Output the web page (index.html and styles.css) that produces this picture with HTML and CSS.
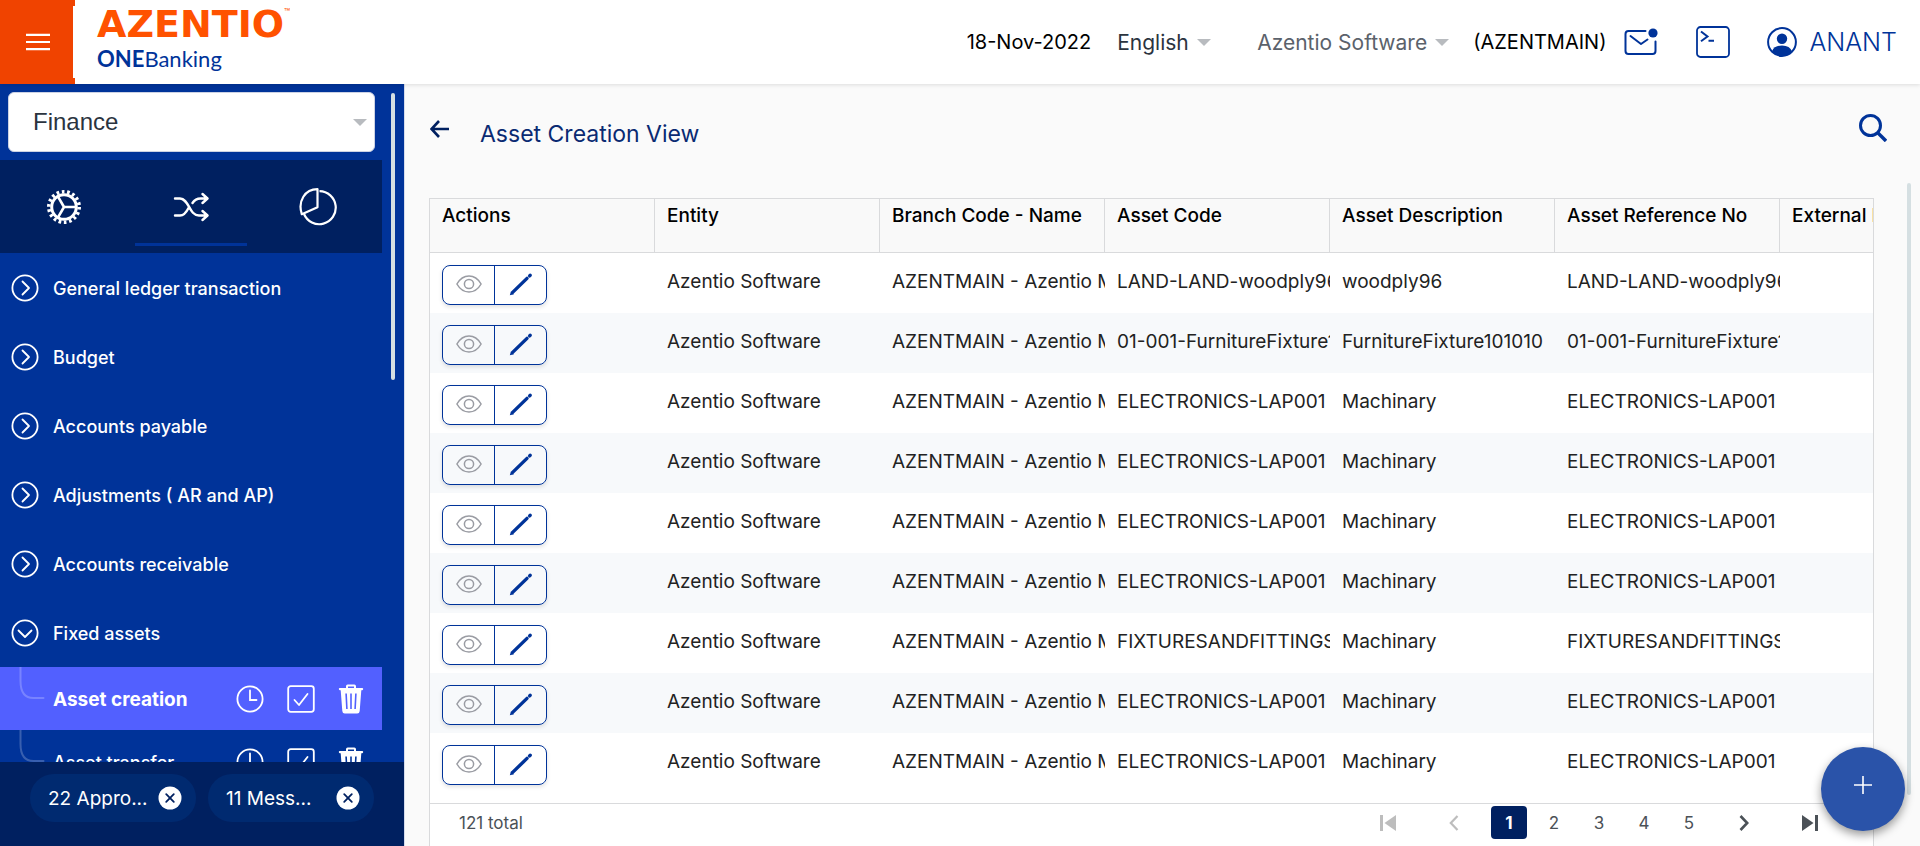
FILE: index.html
```html
<!DOCTYPE html>
<html lang="en">
<head>
<meta charset="utf-8">
<title>Asset Creation View</title>
<link rel="stylesheet" href="styles.css">
</head>
<body>
<svg class="sprite" aria-hidden="true">
  <symbol id="caret" viewBox="0 0 14 7"><path d="M0 0h14L7 7z" fill="currentColor"/></symbol>
  <symbol id="chev-right" viewBox="0 0 28 28"><g fill="none" stroke="currentColor" stroke-width="1.8"><circle cx="14" cy="14" r="12.6"/><path d="M11.5 7.5l6.5 6.5-6.5 6.5" stroke-linecap="round" stroke-linejoin="round"/></g></symbol>
  <symbol id="chev-down" viewBox="0 0 28 28"><g fill="none" stroke="currentColor" stroke-width="1.8"><circle cx="14" cy="14" r="12.6"/><path d="M7.5 11.5l6.5 6.5 6.5-6.5" stroke-linecap="round" stroke-linejoin="round"/></g></symbol>
  <symbol id="clock" viewBox="0 0 28 28"><g fill="none" stroke="currentColor" stroke-width="1.8" stroke-linecap="round"><circle cx="14" cy="14" r="12.6"/><path d="M14 5.5V15h6.5"/></g></symbol>
  <symbol id="check" viewBox="0 0 28 28"><g fill="none" stroke="currentColor" stroke-width="1.8" stroke-linecap="round" stroke-linejoin="round"><rect x="1.2" y="1.2" width="25.6" height="25.6" rx="2.5"/><path d="M7.5 15l4.5 5 8.5-11"/></g></symbol>
  <symbol id="trash" viewBox="0 0 26 30"><path fill="currentColor" fill-rule="evenodd" d="M8 4V2.2Q8 .5 9.700.5h6.600Q18 .5 18 2.200V4h6.200q1 0 1 1t-1 1.200H23.300L21.700 27q-.2 2.500-2.500 2.500H6.800q-2.300 0-2.500-2.500L2.700 6.200H1.800q-1-.2-1-1.200t1-1zm2 0h6V2.500h-6zM7.300 9.500l.8 15.500h1.600L8.900 9.500zm4.900 0V25h1.600V9.500zm4.900 0L16.300 25h1.600l.8-15.500z"/></symbol>
  <symbol id="branch" viewBox="0 0 26 34"><path d="M1.500 0v14q0 17 13 17h10" fill="none" stroke="currentColor" stroke-width="2" stroke-linecap="round"/></symbol>
  <symbol id="close" viewBox="0 0 24 24"><circle cx="12" cy="12" r="11.500" fill="#fff"/><path d="M8.200 8.200l7.600 7.600m0-7.600l-7.600 7.600" stroke="#002060" stroke-width="1.800" stroke-linecap="round"/></symbol>
  <symbol id="eye" viewBox="0 0 26 18"><g fill="none" stroke="currentColor" stroke-width="1.500"><path d="M.9 9Q5.500 1 13 1t12.100 8Q20.500 17 13 17T.9 9z"/><circle cx="13" cy="9" r="4.600"/></g></symbol>
  <symbol id="pencil" viewBox="0 0 24 24"><path d="M3.600 20.400L18 6.400M20.600 3.900l.6-.6" fill="none" stroke="currentColor" stroke-width="3.400" stroke-linecap="round"/><path d="M.8 23.200l1.200-4 3 3z" fill="currentColor"/></symbol>
</svg>

<header class="topbar">
  <button class="burger" aria-label="Menu">
    <svg width="24" height="18" viewBox="0 0 24 18"><path d="M0 1.800h24M0 9h24M0 16.200h24" stroke="#fff" stroke-width="2.200"/></svg>
  </button>
  <a class="brand" href="#">
    <span class="brand-name">AZENTIO<sup>™</sup></span>
    <span class="brand-sub"><b>ONE</b>Banking</span>
  </a>
  <div class="tools">
    <span class="info">18-Nov-2022</span>
    <label class="pick language"><select aria-label="Language"><option>English</option></select><svg width="14" height="7"><use href="#caret"/></svg></label>
    <label class="pick company"><select aria-label="Company"><option>Azentio Software</option></select><svg width="14" height="7"><use href="#caret"/></svg></label>
    <span class="info">(AZENTMAIN)</span>
    <button class="plain mail" aria-label="Messages">
      <svg width="34" height="28" viewBox="0 0 34 28"><g fill="none" stroke="currentColor" stroke-width="2" stroke-linecap="round" stroke-linejoin="round"><path d="M21.500 3H4.500Q1.500 3 1.500 6v17q0 3 3 3h24q3 0 3-3V13.500"/><path d="M6.500 8l10.500 8 6.500-4.500"/></g><circle cx="29" cy="5" r="4.600" fill="currentColor"/></svg>
    </button>
    <button class="plain terminal" aria-label="Terminal">
      <svg width="34" height="32" viewBox="0 0 34 32"><g fill="none" stroke="currentColor"><rect x="1" y="1" width="32" height="30" rx="3.500" stroke-width="1.800"/><path d="M5 5.500l6.500 5L5 15.200M12.500 14.800h5.500" stroke-width="2"/></g></svg>
    </button>
    <a class="user" href="#">
      <svg width="30" height="30" viewBox="0 0 30 30"><circle cx="15" cy="15" r="13.900" fill="none" stroke="currentColor" stroke-width="2"/><circle cx="15" cy="11.800" r="5.200" fill="currentColor"/><path d="M5 24.500q2-6 10-6t10 6Q21 29 15 29T5 24.500z" fill="currentColor"/></svg>
      <span>ANANT</span>
    </a>
  </div>
</header>

<div class="shell">
  <aside class="sidebar">
    <div class="side-scroll">
      <div class="side-body">
        <label class="module"><select aria-label="Module"><option>Finance</option></select><svg width="14" height="7"><use href="#caret"/></svg></label>
        <div class="tabs">
          <button class="tab" aria-label="Settings">
            <svg width="36" height="36" viewBox="0 0 36 36"><g fill="none" stroke="#fff"><circle cx="18" cy="18" r="12.300" stroke-width="3"/><circle cx="18" cy="18" r="15.200" stroke-width="3.600" stroke-dasharray="2.650 2.656"/><path d="M18 18h12M18 18L12 7.600M18 18l-6 10.400" stroke-width="2.600"/></g></svg>
          </button>
          <button class="tab current" aria-label="Transactions">
            <svg width="36" height="30" viewBox="0 0 36 30"><g fill="none" stroke="#fff" stroke-width="2.400" stroke-linecap="round" stroke-linejoin="round"><path d="M2 6.500h5c9 0 9 17 19 17h8M2 23.500h5c4.500 0 6.500-3.500 8.500-7.500M19.500 11c2-3 4-4.500 8-4.500H34M29.500 2l5 4.500-5 4.500M29.500 19l5 4.500-5 4.500"/></g></svg>
          </button>
          <button class="tab" aria-label="Reports">
            <svg width="38" height="38" viewBox="0 0 38 38"><g fill="none" stroke="#fff" stroke-width="2.200" stroke-linejoin="round"><path d="M18.500 1.200v18L2.800 26.200C-1.500 13 6 1.200 18.500 1.200z"/><path d="M20.500 3.200A16.500 16.500 0 1 1 5 26"/></g></svg>
          </button>
        </div>
        <nav class="menu">
          <a class="item" href="#"><svg width="28" height="28"><use href="#chev-right"/></svg><span>General ledger transaction</span></a>
          <a class="item" href="#"><svg width="28" height="28"><use href="#chev-right"/></svg><span>Budget</span></a>
          <a class="item" href="#"><svg width="28" height="28"><use href="#chev-right"/></svg><span>Accounts payable</span></a>
          <a class="item" href="#"><svg width="28" height="28"><use href="#chev-right"/></svg><span>Adjustments ( AR and AP)</span></a>
          <a class="item" href="#"><svg width="28" height="28"><use href="#chev-right"/></svg><span>Accounts receivable</span></a>
          <a class="item" href="#"><svg width="28" height="28"><use href="#chev-down"/></svg><span>Fixed assets</span></a>
          <div class="subitem active">
            <svg class="twig" width="26" height="34"><use href="#branch"/></svg>
            <a href="#">Asset creation</a>
            <button class="plain" aria-label="Pending"><svg width="28" height="28"><use href="#clock"/></svg></button>
            <button class="plain" aria-label="Approve"><svg width="28" height="28"><use href="#check"/></svg></button>
            <button class="plain" aria-label="Delete"><svg width="26" height="30"><use href="#trash"/></svg></button>
          </div>
          <div class="subitem">
            <svg class="twig" width="26" height="34"><use href="#branch"/></svg>
            <a href="#">Asset transfer</a>
            <button class="plain" aria-label="Pending"><svg width="28" height="28"><use href="#clock"/></svg></button>
            <button class="plain" aria-label="Approve"><svg width="28" height="28"><use href="#check"/></svg></button>
            <button class="plain" aria-label="Delete"><svg width="26" height="30"><use href="#trash"/></svg></button>
          </div>
        </nav>
      </div>
      <div class="thumb side-thumb"></div>
    </div>
    <footer class="chips">
      <div class="chip"><span>22 Appro...</span><button class="plain" aria-label="Dismiss approvals"><svg width="24" height="24"><use href="#close"/></svg></button></div>
      <div class="chip"><span>11 Mess...</span><button class="plain" aria-label="Dismiss messages"><svg width="24" height="24"><use href="#close"/></svg></button></div>
    </footer>
  </aside>

  <main class="content">
    <div class="heading">
      <button class="plain back" aria-label="Back"><svg width="20" height="18" viewBox="0 0 20 18"><path d="M9 1L1.500 9 9 17M1.500 9H19" fill="none" stroke="currentColor" stroke-width="2.600"/></svg></button>
      <h1>Asset Creation View</h1>
      <button class="plain search" aria-label="Search"><svg width="28" height="28" viewBox="0 0 28 28"><circle cx="11.500" cy="11.500" r="10" fill="none" stroke="currentColor" stroke-width="3"/><path d="M18.500 18.500l8.500 8.500" stroke="currentColor" stroke-width="3.400"/></svg></button>
    </div>
    <div class="panel-row">
      <section class="panel">
        <div class="table-clip">
        <table>
          <thead><tr><th>Actions</th><th>Entity</th><th>Branch Code - Name</th><th>Asset Code</th><th>Asset Description</th><th>Asset Reference No</th><th>External Reference</th></tr></thead>
          <tbody>
            <tr><td><div class="pair"><button aria-label="View"><svg width="26" height="18"><use href="#eye"/></svg></button><button aria-label="Edit"><svg width="24" height="24"><use href="#pencil"/></svg></button></div></td><td>Azentio Software</td><td>AZENTMAIN - Azentio Main</td><td>LAND-LAND-woodply96</td><td>woodply96</td><td>LAND-LAND-woodply96</td><td></td></tr>
            <tr><td><div class="pair"><button aria-label="View"><svg width="26" height="18"><use href="#eye"/></svg></button><button aria-label="Edit"><svg width="24" height="24"><use href="#pencil"/></svg></button></div></td><td>Azentio Software</td><td>AZENTMAIN - Azentio Main</td><td>01-001-FurnitureFixture101010</td><td>FurnitureFixture101010</td><td>01-001-FurnitureFixture101010</td><td></td></tr>
            <tr><td><div class="pair"><button aria-label="View"><svg width="26" height="18"><use href="#eye"/></svg></button><button aria-label="Edit"><svg width="24" height="24"><use href="#pencil"/></svg></button></div></td><td>Azentio Software</td><td>AZENTMAIN - Azentio Main</td><td>ELECTRONICS-LAP001</td><td>Machinary</td><td>ELECTRONICS-LAP001</td><td></td></tr>
            <tr><td><div class="pair"><button aria-label="View"><svg width="26" height="18"><use href="#eye"/></svg></button><button aria-label="Edit"><svg width="24" height="24"><use href="#pencil"/></svg></button></div></td><td>Azentio Software</td><td>AZENTMAIN - Azentio Main</td><td>ELECTRONICS-LAP001</td><td>Machinary</td><td>ELECTRONICS-LAP001</td><td></td></tr>
            <tr><td><div class="pair"><button aria-label="View"><svg width="26" height="18"><use href="#eye"/></svg></button><button aria-label="Edit"><svg width="24" height="24"><use href="#pencil"/></svg></button></div></td><td>Azentio Software</td><td>AZENTMAIN - Azentio Main</td><td>ELECTRONICS-LAP001</td><td>Machinary</td><td>ELECTRONICS-LAP001</td><td></td></tr>
            <tr><td><div class="pair"><button aria-label="View"><svg width="26" height="18"><use href="#eye"/></svg></button><button aria-label="Edit"><svg width="24" height="24"><use href="#pencil"/></svg></button></div></td><td>Azentio Software</td><td>AZENTMAIN - Azentio Main</td><td>ELECTRONICS-LAP001</td><td>Machinary</td><td>ELECTRONICS-LAP001</td><td></td></tr>
            <tr><td><div class="pair"><button aria-label="View"><svg width="26" height="18"><use href="#eye"/></svg></button><button aria-label="Edit"><svg width="24" height="24"><use href="#pencil"/></svg></button></div></td><td>Azentio Software</td><td>AZENTMAIN - Azentio Main</td><td>FIXTURESANDFITTINGS</td><td>Machinary</td><td>FIXTURESANDFITTINGS</td><td></td></tr>
            <tr><td><div class="pair"><button aria-label="View"><svg width="26" height="18"><use href="#eye"/></svg></button><button aria-label="Edit"><svg width="24" height="24"><use href="#pencil"/></svg></button></div></td><td>Azentio Software</td><td>AZENTMAIN - Azentio Main</td><td>ELECTRONICS-LAP001</td><td>Machinary</td><td>ELECTRONICS-LAP001</td><td></td></tr>
            <tr><td><div class="pair"><button aria-label="View"><svg width="26" height="18"><use href="#eye"/></svg></button><button aria-label="Edit"><svg width="24" height="24"><use href="#pencil"/></svg></button></div></td><td>Azentio Software</td><td>AZENTMAIN - Azentio Main</td><td>ELECTRONICS-LAP001</td><td>Machinary</td><td>ELECTRONICS-LAP001</td><td></td></tr>
          </tbody>
        </table>
        </div>
        <div class="table-foot">
          <span>121 total</span>
          <nav class="pager" aria-label="Pages">
            <button class="plain jump" aria-label="First page" disabled><svg width="16" height="16" viewBox="0 0 16 16"><path d="M0 0h3v16H0zM16 0v16L4.500 8z" fill="currentColor"/></svg></button>
            <button class="plain jump" aria-label="Previous page" disabled><svg width="10" height="16" viewBox="0 0 10 16"><path d="M8.500 1L1.800 8l6.700 7" fill="none" stroke="currentColor" stroke-width="2.200"/></svg></button>
            <div class="pages">
              <button class="plain page on">1</button>
              <button class="plain page">2</button>
              <button class="plain page">3</button>
              <button class="plain page">4</button>
              <button class="plain page">5</button>
            </div>
            <button class="plain jump" aria-label="Next page"><svg width="10" height="16" viewBox="0 0 10 16"><path d="M1.500 1l6.700 7-6.700 7" fill="none" stroke="currentColor" stroke-width="2.600"/></svg></button>
            <button class="plain jump" aria-label="Last page"><svg width="16" height="16" viewBox="0 0 16 16"><path d="M13 0h3v16h-3zM0 0v16l11.500-8z" fill="currentColor"/></svg></button>
          </nav>
        </div>
      </section>
      <div class="thumb main-thumb"></div>
    </div>
  </main>
</div>
<button class="fab" aria-label="Add"><svg width="18" height="18" viewBox="0 0 18 18"><path d="M9 0v18M0 9h18" stroke="#fff" stroke-width="1.600"/></svg></button>
</body>
</html>
```
FILE: styles.css
```css
* { box-sizing: border-box; }
body {
  margin: 0;
  height: 100vh;
  display: flex;
  flex-direction: column;
  overflow: hidden;
  font-family: Inter, "Liberation Sans", sans-serif;
  font-size: 19px;
  color: #222;
  background: #fafafa;
}
a { color: inherit; text-decoration: none; }
svg { display: block; flex: none; }
select, button { font: inherit; color: inherit; border: 0; background: none; padding: 0; margin: 0; appearance: none; }
.sprite { position: absolute; width: 0; height: 0; }
.plain { display: flex; align-items: center; justify-content: center; }

.topbar {
  flex: none;
  height: 84px;
  display: flex;
  background: #fff;
  box-shadow: 0 1px 4px rgba(0, 0, 0, .12);
  z-index: 1;
}
.burger {
  width: 75px;
  display: flex;
  align-items: center;
  justify-content: center;
  background: linear-gradient(#fff, #fff) right center / 2px 72px no-repeat #f04300;
}
.brand { display: flex; flex-direction: column; padding: 4px 0 0 22px; color: #003399; }
.brand-name { display: flex; font: bold 38px/40px "DejaVu Sans", sans-serif; color: #ff5200; }
.brand-name sup { font: 10px/16px Inter, sans-serif; }
.brand-sub { font: 22px/30px Lato, sans-serif; }
.tools { margin-left: auto; display: flex; align-items: center; padding: 0 23px 0 0; }
.info { font-size: 20px; color: #000; }
.pick { display: flex; align-items: center; gap: 8px; font-size: 21px; color: #b8bbbf; }
.language { margin-left: 26px; }
.language select { color: #2b343f; }
.company { margin: 0 24px 0 46px; }
.company select { color: #5b626b; }
.mail, .terminal, .user { color: #003399; }
.mail { margin-left: 18px; }
.terminal { margin-left: 38px; }
.user { margin-left: 37px; display: flex; align-items: center; gap: 12px; font-size: 25px; font-weight: 300; }

.shell { flex: 1; min-height: 0; display: flex; }
.sidebar {
  flex: none;
  width: 405px;
  display: flex;
  flex-direction: column;
  border-right: 1px solid #d5dcec;
  background: #003399;
  color: #fff;
}
.side-scroll { flex: 1; min-height: 0; display: flex; gap: 9px; overflow: hidden; }
.side-body { width: 382px; }
.module {
  display: flex;
  align-items: center;
  height: 60px;
  margin: 8px 7px 8px 8px;
  padding: 0 7px 0 24px;
  border: 1px solid #ccd2e4;
  border-radius: 6px;
  background: #fff;
  color: #b8bbbf;
}
.module select { flex: 1; font: 24px/30px "Liberation Sans", Arial, sans-serif; color: #2b343f; }
.tabs { display: grid; grid-template-columns: repeat(3, 1fr); height: 93px; background: #002060; }
.tab { display: grid; grid-template-rows: 1fr 3px 7px; justify-items: center; align-items: center; padding-top: 10px; }
.tab.current::after { content: ""; width: 112px; height: 3px; background: #003399; }
.item { display: flex; align-items: center; gap: 14px; height: 69px; padding-left: 11px; font-size: 18px; font-weight: 500; }
.item span { padding-top: 2px; }
.subitem { display: flex; align-items: center; height: 63px; padding-right: 18px; font-size: 18px; font-weight: 500; }
.subitem a { flex: 1; padding: 2px 0 0 8px; }
.subitem .plain { margin-left: 23px; }
.twig { align-self: flex-start; margin-left: 19px; color: rgba(255, 255, 255, .22); }
.active { background: #5260ff; font-size: 19px; font-weight: 700; }
.thumb { width: 4px; border-radius: 2px; background: #d5dfe2; }
.side-thumb { height: 287px; margin-top: 9px; }
.chips { flex: none; height: 84px; display: flex; gap: 12px; padding: 12px 30px; background: #002060; }
.chip { flex: 1; height: 48px; display: flex; align-items: center; justify-content: space-between; padding: 0 14px 0 18px; border-radius: 24px; background: #002a70; }

.content { flex: 1; min-width: 0; display: flex; flex-direction: column; }
.heading { flex: none; height: 99px; display: flex; align-items: flex-start; padding: 30px 33px 0 25px; color: #003399; }
.back { margin-top: 6px; color: #002060; }
.heading h1 { margin: 0 auto 0 30px; font-size: 23px; line-height: 40px; font-weight: 400; color: #0a2a72; }
.panel-row { flex: 1; min-height: 0; display: flex; gap: 33px; padding: 0 9px 0 24px; }
.panel { flex: 1; min-width: 0; margin-top: 15px; border: 1px solid #d9dadc; border-bottom: 0; background: #fff; }
.main-thumb { height: 612px; }
.table-clip { overflow: hidden; padding-bottom: 10px; }
table { width: 1575px; table-layout: fixed; border-collapse: separate; border-spacing: 0; }
th, td { padding: 0 0 0 12px; text-align: left; vertical-align: top; white-space: nowrap; overflow: hidden; }
th { height: 54px; padding-top: 4px; line-height: 26px; font-weight: 500; color: #000; background: #f9f9f9; border: solid #d9dadc; border-width: 0 1px 1px 0; }
td { height: 60px; padding-top: 12px; line-height: 34px; }
tbody tr:nth-child(even) { background: #f7f9fb; }
.pair { display: flex; width: 105px; height: 40px; border: 1px solid #003399; border-radius: 8px; box-shadow: 0 2px 4px rgba(0, 0, 0, .12); }
.pair button { flex: 1; display: flex; align-items: center; justify-content: center; padding-bottom: 3px; color: #9a9ca3; }
.pair button + button { border-left: 1px solid #003399; color: #003399; }
.table-foot { display: flex; align-items: center; height: 38px; padding: 0 30px 0 29px; border-top: 1px solid #d9dadc; font-size: 17px; color: #4b5157; }
.pager { display: flex; align-items: center; margin-left: auto; }
.jump { width: 66px; height: 33px; }
.jump:disabled { color: #bdbdbd; }
.pages { display: flex; gap: 9px; margin: 0 4px; }
.page { width: 36px; height: 33px; border-radius: 4px; }
.page.on { background: #002060; color: #fff; font-weight: 700; }
.fab {
  position: absolute;
  right: 15px;
  bottom: 15px;
  width: 84px;
  height: 84px;
  display: grid;
  place-items: center;
  padding-bottom: 8px;
  border-radius: 50%;
  background: #2a53a9;
  box-shadow: 0 4px 10px rgba(0, 0, 0, .4);
  z-index: 2;
}
```
